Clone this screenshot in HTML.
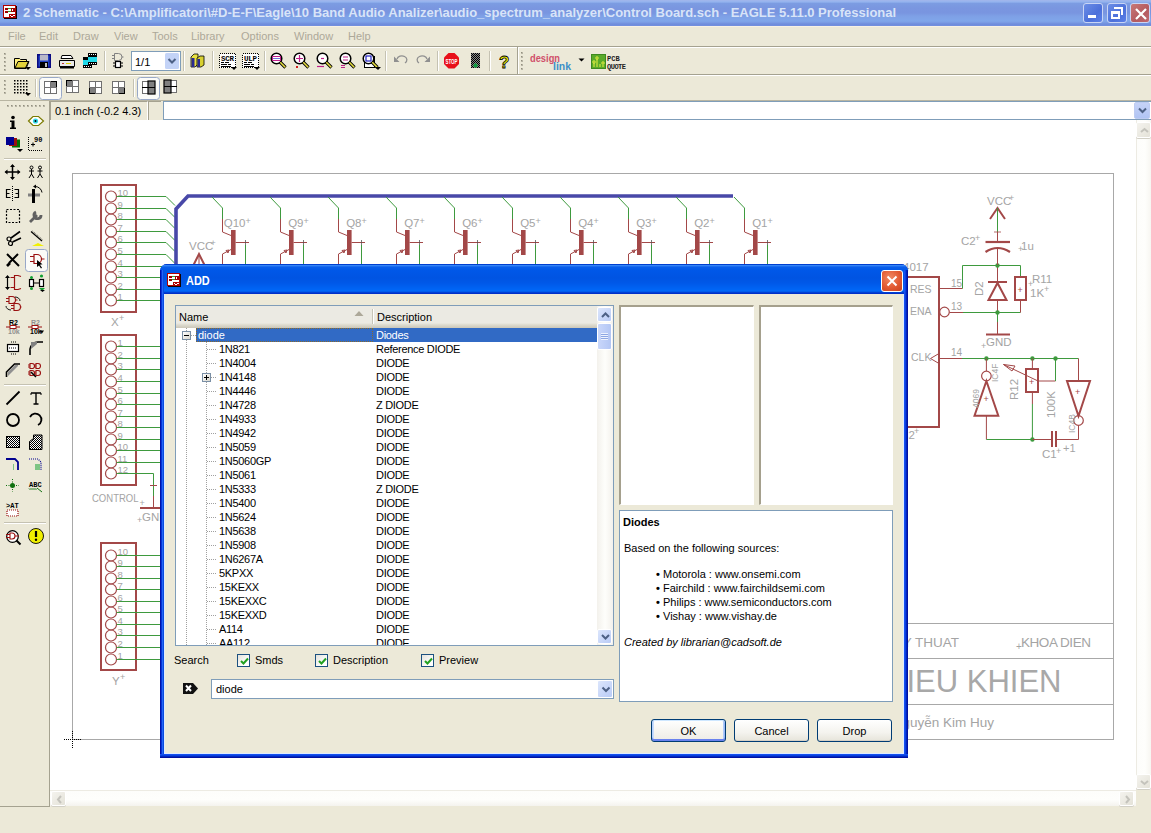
<!DOCTYPE html>
<html><head><meta charset="utf-8">
<style>
*{box-sizing:border-box}
html,body{margin:0;padding:0}
body{width:1151px;height:833px;overflow:hidden;position:relative;background:#ECE9D8;font:11px "Liberation Sans",sans-serif;color:#000}
.a{position:absolute}
.t{position:absolute;white-space:pre;line-height:13px}
#title{left:0;top:0;width:1151px;height:26px;background:linear-gradient(#A2B5EA 0,#9CB6EE 1px,#92B2EE 2px,#7C9CE2 3.5px,#7A96E0 8px,#7995E0 13px,#7EA0E6 16px,#80A6EA 21px,#7898E2 23px,#6E8CDC 24px,#7390DE 26px)}
#title .tt{left:23px;top:5px;font:bold 13px "Liberation Sans",sans-serif;color:#D8E4F8;line-height:16px}
.wb{position:absolute;top:3px;width:20px;height:20px;border-radius:3px;border:1px solid #C9D5F5;background:linear-gradient(135deg,#6C8EE6,#4C70DA 60%,#5C80E8)}
.menu{color:#ACA899;top:30px}
.sepH{position:absolute;left:0;width:1151px;height:2px;border-top:1px solid #A5A290;border-bottom:1px solid #fff}
.grip{position:absolute;width:2px;background:repeating-linear-gradient(#ACA899 0 1px,transparent 1px 3px)}
.vsep{position:absolute;width:2px;border-left:1px solid #C5C2B2;border-right:1px solid #fff}
.tbtn{position:absolute;border:1px solid #9CB3D8;border-radius:3px;background:#F8F8F4}
#canvas{left:50px;top:120px;width:1086px;height:670px;background:#fff;overflow:hidden}
.sb{position:absolute;background:#FDFDFB}
.sbbtn{position:absolute;border:1px solid #fff;border-radius:2px;background:linear-gradient(135deg,#F4F3EE,#E4E2D8);box-shadow:0 1px 0 #D2D0C6}
</style></head><body>

<!-- Title bar -->
<div id="title" class="a">
  <svg class="a" style="left:3px;top:5px" width="16" height="16" viewBox="0 0 16 16" shape-rendering="crispEdges">
    <rect x="1" y="1" width="13" height="13" fill="#100000"/>
    <rect x="0" y="0" width="13" height="13" fill="#B00000"/>
    <rect x="1" y="1" width="11" height="11" fill="#fff"/>
    <rect x="2" y="3" width="3" height="2" fill="#A00000"/><rect x="2" y="6" width="3" height="2" fill="#A00000"/>
    <rect x="5" y="3" width="3" height="1" fill="#30A030"/><rect x="5" y="6" width="3" height="1" fill="#30A030"/><rect x="8" y="3" width="4" height="4" fill="#A00000"/><rect x="9" y="4" width="1" height="2" fill="#fff"/>
    <rect x="6" y="9" width="7" height="4" fill="#B00000"/><rect x="7" y="10" width="1" height="1" fill="#fff"/><rect x="8" y="11" width="2" height="1" fill="#fff"/><rect x="10" y="10" width="2" height="1" fill="#fff"/>
  </svg>
  <div class="t tt">2 Schematic - C:\Amplificatori\#D-E-F\Eagle\10 Band Audio Analizer\audio_spectrum_analyzer\Control Board.sch - EAGLE 5.11.0 Professional</div>
  <div class="wb" style="left:1083px"><div class="a" style="left:4px;top:11px;width:8px;height:3px;background:#fff"></div></div>
  <div class="wb" style="left:1107px"><div class="a" style="left:3px;top:7px;width:9px;height:8px;border:2px solid #fff;border-top-width:3px"></div><div class="a" style="left:6px;top:3px;width:9px;height:8px;border-top:2px solid #fff;border-right:2px solid #fff"></div></div>
  <div class="wb" style="left:1130px;background:linear-gradient(135deg,#C87878,#B45A60 60%,#C06A70)"><svg class="a" style="left:3px;top:3px" width="14" height="14"><path d="M2 2 L12 12 M12 2 L2 12" stroke="#fff" stroke-width="2.2"/></svg></div>
</div>

<!-- Menu -->
<div class="a" style="left:0;top:26px;width:1151px;height:1px;background:#F7F1E4"></div>
<div class="t menu" style="left:8px">File</div>
<div class="t menu" style="left:39px">Edit</div>
<div class="t menu" style="left:73px">Draw</div>
<div class="t menu" style="left:114px">View</div>
<div class="t menu" style="left:152px">Tools</div>
<div class="t menu" style="left:191px">Library</div>
<div class="t menu" style="left:241px">Options</div>
<div class="t menu" style="left:294px">Window</div>
<div class="t menu" style="left:348px">Help</div>
<div class="sepH" style="top:46px"></div>
<div class="sepH" style="top:74px"></div>
<div class="sepH" style="top:100px;border-top-color:#B8B5A2;border-bottom:none;height:1px"></div>

<!-- toolbar1 placeholder -->
<div id="tb1"><svg class="a" style="left:0;top:47px" width="640" height="53" viewBox="0 47 640 53" font-family="Liberation Sans, sans-serif"><rect x="4" y="53" width="2" height="2" fill="#B8B5A5"/><rect x="4" y="53" width="1" height="1" fill="#918E7E"/>
<rect x="4" y="57" width="2" height="2" fill="#B8B5A5"/><rect x="4" y="57" width="1" height="1" fill="#918E7E"/>
<rect x="4" y="61" width="2" height="2" fill="#B8B5A5"/><rect x="4" y="61" width="1" height="1" fill="#918E7E"/>
<rect x="4" y="65" width="2" height="2" fill="#B8B5A5"/><rect x="4" y="65" width="1" height="1" fill="#918E7E"/>
<rect x="4" y="69" width="2" height="2" fill="#B8B5A5"/><rect x="4" y="69" width="1" height="1" fill="#918E7E"/>
<rect x="4" y="80" width="2" height="2" fill="#B8B5A5"/><rect x="4" y="80" width="1" height="1" fill="#918E7E"/>
<rect x="4" y="84" width="2" height="2" fill="#B8B5A5"/><rect x="4" y="84" width="1" height="1" fill="#918E7E"/>
<rect x="4" y="88" width="2" height="2" fill="#B8B5A5"/><rect x="4" y="88" width="1" height="1" fill="#918E7E"/>
<rect x="4" y="92" width="2" height="2" fill="#B8B5A5"/><rect x="4" y="92" width="1" height="1" fill="#918E7E"/>
<rect x="104" y="51" width="1" height="20" fill="#C5C2B2"/><rect x="105" y="51" width="1" height="20" fill="#FFFFFF"/>
<rect x="183" y="51" width="1" height="20" fill="#C5C2B2"/><rect x="184" y="51" width="1" height="20" fill="#FFFFFF"/>
<rect x="212" y="51" width="1" height="20" fill="#C5C2B2"/><rect x="213" y="51" width="1" height="20" fill="#FFFFFF"/>
<rect x="264" y="51" width="1" height="20" fill="#C5C2B2"/><rect x="265" y="51" width="1" height="20" fill="#FFFFFF"/>
<rect x="385" y="51" width="1" height="20" fill="#C5C2B2"/><rect x="386" y="51" width="1" height="20" fill="#FFFFFF"/>
<rect x="437" y="51" width="1" height="20" fill="#C5C2B2"/><rect x="438" y="51" width="1" height="20" fill="#FFFFFF"/>
<rect x="489" y="51" width="1" height="20" fill="#C5C2B2"/><rect x="490" y="51" width="1" height="20" fill="#FFFFFF"/>
<rect x="35" y="79" width="1" height="18" fill="#C5C2B2"/><rect x="36" y="79" width="1" height="18" fill="#FFFFFF"/>
<rect x="133" y="79" width="1" height="18" fill="#C5C2B2"/><rect x="134" y="79" width="1" height="18" fill="#FFFFFF"/>
<rect x="517" y="47" width="1" height="27" fill="#A5A290"/><rect x="518" y="47" width="1" height="27" fill="#fff"/>
<rect x="521" y="52" width="2" height="2" fill="#B8B5A5"/><rect x="521" y="52" width="1" height="1" fill="#918E7E"/>
<rect x="521" y="56" width="2" height="2" fill="#B8B5A5"/><rect x="521" y="56" width="1" height="1" fill="#918E7E"/>
<rect x="521" y="60" width="2" height="2" fill="#B8B5A5"/><rect x="521" y="60" width="1" height="1" fill="#918E7E"/>
<rect x="521" y="64" width="2" height="2" fill="#B8B5A5"/><rect x="521" y="64" width="1" height="1" fill="#918E7E"/>
<rect x="521" y="68" width="2" height="2" fill="#B8B5A5"/><rect x="521" y="68" width="1" height="1" fill="#918E7E"/>
<path d="M14.5 58.5 h5 l1 1 h6 v2 h2.5 l-3 7 h-11.5 z" fill="#FFF07A" stroke="#000" stroke-width="1"/>
<path d="M15 68 l3 -6.5 h10.5 l-3 6.5 z" fill="#E3D23A" stroke="#000" stroke-width="1"/>
<path d="M25 67 h6 l-3 3 z" fill="#000"/>
<rect x="37" y="54" width="14" height="14" fill="#0A0A80"/><rect x="38.5" y="55.5" width="11" height="11" fill="#2040C0"/><rect x="40" y="54.5" width="8" height="6" fill="#B8B8C8"/><rect x="40" y="62" width="8" height="6" fill="#000"/><rect x="45" y="63" width="2" height="4" fill="#C0C0C0"/>
<path d="M62 55.5 h9 l2 3 v0 h-12 z" fill="#fff" stroke="#000"/><path d="M59.5 60.5 h15 v6 h-15 z" fill="#E8E8E8" stroke="#000"/><rect x="60" y="66.5" width="14" height="2" fill="#000"/><rect x="62" y="63" width="2" height="1" fill="#C03030"/><rect x="66" y="63" width="5" height="1" fill="#E0D000"/>
<rect x="88" y="53" width="9" height="4" fill="#000"/><rect x="83" y="57" width="14" height="8" fill="#20D8E8"/><rect x="83" y="57" width="5" height="3" fill="#000"/><rect x="88" y="62" width="9" height="3" fill="#000"/><rect x="83" y="65" width="9" height="3" fill="#000"/>
<g fill="#fff"><rect x="89" y="54" width="1" height="1"/><rect x="91" y="54" width="1" height="1"/><rect x="93" y="54" width="1" height="1"/><rect x="95" y="54" width="1" height="1"/><rect x="89" y="63" width="1" height="1"/><rect x="91" y="63" width="1" height="1"/><rect x="93" y="63" width="1" height="1"/><rect x="95" y="63" width="1" height="1"/><rect x="84" y="66" width="1" height="1"/><rect x="86" y="66" width="1" height="1"/><rect x="88" y="66" width="1" height="1"/><rect x="90" y="66" width="1" height="1"/></g>
<path d="M114.5 53.5 h4 a3.5 3.5 0 0 1 0 7 h-4 z M112 55.5 h2.5 M112 58.5 h2.5 M122 57 h1.5" fill="none" stroke="#808080"/>
<rect x="115.5" y="61.5" width="5" height="6" fill="#fff" stroke="#000" stroke-width="1.2"/><path d="M113 63 h2.5 M113 66 h2.5 M120.5 63 h2.5 M120.5 66 h2.5" stroke="#000" stroke-width="1.2"/>
<rect x="131.5" y="51.5" width="49" height="19" fill="#fff" stroke="#7F9DB9"/>
<rect x="165" y="53" width="14" height="16" rx="1.5" fill="#C3D3F7"/>
<path d="M168.5 59 l3.5 3.5 l3.5 -3.5" fill="none" stroke="#4D6185" stroke-width="2"/>
<text x="135" y="65.5" font-size="11" fill="#000" font-family="Liberation Sans">1/1</text>
<path d="M191 57 l3 -3 h4 v10 l-3 3 h-4 z" fill="#E8E040" stroke="#000" stroke-width="0.8"/><path d="M197 58 l3 -2 h4 v9 l-3 2 h-4 z" fill="#D8D030" stroke="#000" stroke-width="0.8"/><rect x="191.5" y="58" width="3" height="9" fill="#2A2A90"/><rect x="197.5" y="59" width="2.5" height="8" fill="#2A2A90"/>
<rect x="219.5" y="53.5" width="16" height="14" fill="#fff" stroke="#000" stroke-dasharray="1 1" shape-rendering="crispEdges"/>
<text x="221" y="60.5" font-size="7.5" font-weight="bold" fill="#000" font-family="Liberation Mono" textLength="13">SCR</text>
<path d="M221 62.5 h3 M225 62.5 h4 M221 64.5 h6 M228 64.5 h3 M221 66.5 h10" stroke="#000"/>
<path d="M231 67 h6 l-3 3 z" fill="#000"/>
<rect x="242.5" y="53.5" width="16" height="14" fill="#fff" stroke="#000" stroke-dasharray="1 1" shape-rendering="crispEdges"/>
<text x="244" y="60.5" font-size="7.5" font-weight="bold" fill="#000" font-family="Liberation Mono" textLength="13">ULP</text>
<path d="M244 62.5 h3 M248 62.5 h4 M244 64.5 h6 M251 64.5 h3 M244 66.5 h10" stroke="#000"/>
<path d="M254 67 h6 l-3 3 z" fill="#000"/>
<circle cx="276.5" cy="58.5" r="5.3" fill="#fff" stroke="#000" stroke-width="1.5"/>
<path d="M280.0 62 L285.5 67.5" stroke="#000" stroke-width="3.2"/><path d="M280.3 62.3 L285.2 67.2" stroke="#E8E040" stroke-width="1.6"/>
<rect x="272.5" y="56.5" width="8" height="4" fill="none" stroke="#C0208A" shape-rendering="crispEdges"/><path d="M273 58.5 h7" stroke="#5050D0" stroke-width="0.8"/>
<circle cx="299.5" cy="58.5" r="5.3" fill="#fff" stroke="#000" stroke-width="1.5"/>
<path d="M303.0 62 L308.5 67.5" stroke="#000" stroke-width="3.2"/><path d="M303.3 62.3 L308.2 67.2" stroke="#E8E040" stroke-width="1.6"/>
<path d="M299.5 55 v7 M296 58.5 h7" stroke="#C0208A" stroke-width="1.2"/><rect x="296" y="66" width="2" height="2" fill="#D02020"/>
<circle cx="322.5" cy="58.5" r="5.3" fill="#fff" stroke="#000" stroke-width="1.5"/>
<path d="M326.0 62 L331.5 67.5" stroke="#000" stroke-width="3.2"/><path d="M326.3 62.3 L331.2 67.2" stroke="#E8E040" stroke-width="1.6"/>
<path d="M321 58.5 h3" stroke="#C0208A" stroke-width="1.2"/><path d="M317 66.5 h7" stroke="#C0208A" stroke-width="1.2"/>
<circle cx="345.5" cy="58.5" r="5.3" fill="#fff" stroke="#000" stroke-width="1.5"/>
<path d="M349.0 62 L354.5 67.5" stroke="#000" stroke-width="3.2"/><path d="M349.3 62.3 L354.2 67.2" stroke="#E8E040" stroke-width="1.6"/>
<path d="M343 57 h5 M343 60 h5" stroke="#C0208A" stroke-width="1.2"/><path d="M341 65.5 h4 M341 67.5 h4" stroke="#C0208A" stroke-width="1.2"/>
<rect x="364.5" y="56.5" width="10" height="11" fill="#fff" stroke="#000"/>
<circle cx="368.5" cy="58.5" r="5.3" fill="#fff" stroke="#000" stroke-width="1.5"/>
<path d="M372.0 62 L377.5 67.5" stroke="#000" stroke-width="3.2"/><path d="M372.3 62.3 L377.2 67.2" stroke="#E8E040" stroke-width="1.6"/>
<rect x="366" y="56" width="5" height="5" fill="none" stroke="#2020C0" stroke-width="1.2"/>
<path d="M375 67 h6 l-3 3 z" fill="#000"/>
<path d="M397 59 a5 4 0 1 1 8 4" fill="none" stroke="#909090" stroke-width="1.3"/><path d="M394 56.5 v5.5 h5.5 z" fill="#909090"/>
<path d="M427 59 a5 4 0 1 0 -8 4" fill="none" stroke="#909090" stroke-width="1.3"/><path d="M430 56.5 v5.5 h-5.5 z" fill="#909090"/>
<path d="M448.5 53 h6 l4.5 4.5 v6.5 l-4.5 4.5 h-6 l-4.5 -4.5 v-6.5 z" fill="#E8101A"/>
<text x="445.5" y="63.5" font-size="6.5" font-weight="bold" fill="#fff" font-family="Liberation Sans" textLength="12" lengthAdjust="spacingAndGlyphs">STOP</text>
<defs><pattern id="chk" width="2" height="2" patternUnits="userSpaceOnUse"><rect width="1" height="1" fill="#000"/><rect x="1" y="1" width="1" height="1" fill="#000"/><rect x="1" width="1" height="1" fill="#888"/><rect y="1" width="1" height="1" fill="#888"/></pattern></defs>
<rect x="471" y="53" width="9" height="15" fill="url(#chk)"/><path d="M475.5 63 l2.5 2.5 l-2.5 2.5 l-2.5 -2.5 z" fill="#10A040"/>
<text x="499" y="68" font-size="17" font-weight="bold" fill="#F0F000" stroke="#000" stroke-width="0.8" font-family="Liberation Sans">?</text>
<text x="530" y="62" font-size="11" font-weight="bold" fill="#D0506A" font-family="Liberation Sans" textLength="30" lengthAdjust="spacingAndGlyphs">design</text>
<text x="553" y="69.5" font-size="10" font-weight="bold" fill="#3C90C8" font-family="Liberation Sans" textLength="18" lengthAdjust="spacingAndGlyphs">link</text>
<path d="M578.5 58.5 h6 l-3 3 z" fill="#000"/>
<rect x="591" y="54" width="15" height="15" fill="#3E8A1E"/><rect x="592" y="55" width="13" height="13" fill="#5AAA2A"/>
<path d="M594 67 v-4 M597 67 v-8 M600 67 v-3 M603 67 v-2" stroke="#E8F040" stroke-width="1"/><circle cx="594" cy="62" r="1.2" fill="none" stroke="#E8F040"/><circle cx="597" cy="58" r="1.2" fill="none" stroke="#E8F040"/><circle cx="603" cy="63" r="1.2" fill="none" stroke="#E8F040"/>
<text x="607" y="60.5" font-size="7" font-weight="bold" fill="#222" font-family="Liberation Mono">PCB</text><text x="607" y="68.5" font-size="7" font-weight="bold" fill="#222" font-family="Liberation Mono" textLength="19">QUOTE</text>
<rect x="14" y="80" width="1.5" height="1.5" fill="#000"/>
<rect x="14" y="83" width="1.5" height="1.5" fill="#000"/>
<rect x="14" y="86" width="1.5" height="1.5" fill="#000"/>
<rect x="14" y="89" width="1.5" height="1.5" fill="#000"/>
<rect x="14" y="92" width="1.5" height="1.5" fill="#000"/>
<rect x="17" y="80" width="1.5" height="1.5" fill="#000"/>
<rect x="17" y="83" width="1.5" height="1.5" fill="#000"/>
<rect x="17" y="86" width="1.5" height="1.5" fill="#000"/>
<rect x="17" y="89" width="1.5" height="1.5" fill="#000"/>
<rect x="17" y="92" width="1.5" height="1.5" fill="#000"/>
<rect x="20" y="80" width="1.5" height="1.5" fill="#000"/>
<rect x="20" y="83" width="1.5" height="1.5" fill="#000"/>
<rect x="20" y="86" width="1.5" height="1.5" fill="#000"/>
<rect x="20" y="89" width="1.5" height="1.5" fill="#000"/>
<rect x="20" y="92" width="1.5" height="1.5" fill="#000"/>
<rect x="23" y="80" width="1.5" height="1.5" fill="#000"/>
<rect x="23" y="83" width="1.5" height="1.5" fill="#000"/>
<rect x="23" y="86" width="1.5" height="1.5" fill="#000"/>
<rect x="23" y="89" width="1.5" height="1.5" fill="#000"/>
<rect x="23" y="92" width="1.5" height="1.5" fill="#000"/>
<rect x="26" y="80" width="1.5" height="1.5" fill="#000"/>
<rect x="26" y="83" width="1.5" height="1.5" fill="#000"/>
<rect x="26" y="86" width="1.5" height="1.5" fill="#000"/>
<rect x="26" y="89" width="1.5" height="1.5" fill="#000"/>
<rect x="26" y="92" width="1.5" height="1.5" fill="#000"/>
<path d="M25 93 h6 l-3 3 z" fill="#000"/>
<rect x="39.5" y="77.5" width="22" height="22" rx="3" fill="#FBFBF8" stroke="#98A8C8"/>
<rect x="137.5" y="77.5" width="22" height="22" rx="3" fill="#FBFBF8" stroke="#98A8C8"/>
<rect x="44.5" y="81.5" width="12" height="12" fill="#fff" stroke="#707070"/>
<rect x="50.5" y="81.5" width="6" height="6" fill="#808080" stroke="#000" stroke-width="1" shape-rendering="crispEdges"/>
<path d="M50.5 81 v13 M44 87.5 h13" stroke="#707070"/>
<rect x="66.5" y="80.5" width="12" height="12" fill="#fff" stroke="#707070"/>
<rect x="66.5" y="80.5" width="6" height="6" fill="#808080" stroke="#000" stroke-width="1" shape-rendering="crispEdges"/>
<path d="M72.5 80 v13 M66 86.5 h13" stroke="#707070"/>
<rect x="89.5" y="81.5" width="12" height="12" fill="#fff" stroke="#707070"/>
<rect x="89.5" y="87.5" width="6" height="6" fill="#808080" stroke="#000" stroke-width="1" shape-rendering="crispEdges"/>
<path d="M95.5 81 v13 M89 87.5 h13" stroke="#707070"/>
<rect x="112.5" y="81.5" width="12" height="12" fill="#fff" stroke="#707070"/>
<rect x="118.5" y="87.5" width="6" height="6" fill="#808080" stroke="#000" stroke-width="1" shape-rendering="crispEdges"/>
<path d="M118.5 81 v13 M112 87.5 h13" stroke="#707070"/>
<rect x="142.5" y="81.5" width="12" height="12" fill="#fff" stroke="#707070"/><rect x="148" y="81" width="7" height="13" fill="#808080" stroke="#000" stroke-width="1.2"/><path d="M142 87.5 h13" stroke="#000"/>
<rect x="164.5" y="80.5" width="12" height="12" fill="#fff" stroke="#707070"/><rect x="164" y="80" width="7" height="13" fill="#808080" stroke="#000" stroke-width="1.2"/><path d="M164 86.5 h13" stroke="#000"/></svg></div>

<!-- coordinate bar -->
<div class="a" style="left:50px;top:101px;width:98px;height:19px;border-top:1px solid #A5A290;border-left:1px solid #A5A290;border-right:1px solid #fff;"></div>
<div class="t" style="left:55px;top:105px">0.1 inch (-0.2 4.3)</div>
<div class="a" style="left:148px;top:101px;width:13px;height:19px;border-top:1px solid #A5A290;border-left:1px solid #A5A290;"></div>
<div class="a" style="left:163px;top:101px;width:988px;height:19px;background:#fff;border:1px solid #7F9DB9;border-right:none"></div>
<div class="a" style="left:1134px;top:102px;width:16px;height:17px;border-radius:2px;background:linear-gradient(#C6D3F7,#B0C4F4);border:1px solid #BDCCF2"><svg class="a" style="left:3px;top:4px" width="9" height="7"><path d="M1 1.5 L4.5 5 L8 1.5" stroke="#4D6185" stroke-width="2" fill="none"/></svg></div>

<!-- left toolbar -->
<div class="a" style="left:49px;top:101px;width:1px;height:705px;background:#A5A290"></div>
<div class="a" style="left:0;top:806px;width:50px;height:1px;background:#A5A290"></div>
<div id="lefttb"><svg class="a" style="left:0;top:101px" width="49" height="460" viewBox="0 101 49 460" font-family="Liberation Sans, sans-serif"><rect x="7" y="105" width="2" height="2" fill="#B8B5A5"/><rect x="7" y="105" width="1" height="1" fill="#918E7E"/>
<rect x="11" y="105" width="2" height="2" fill="#B8B5A5"/><rect x="11" y="105" width="1" height="1" fill="#918E7E"/>
<rect x="15" y="105" width="2" height="2" fill="#B8B5A5"/><rect x="15" y="105" width="1" height="1" fill="#918E7E"/>
<rect x="19" y="105" width="2" height="2" fill="#B8B5A5"/><rect x="19" y="105" width="1" height="1" fill="#918E7E"/>
<rect x="23" y="105" width="2" height="2" fill="#B8B5A5"/><rect x="23" y="105" width="1" height="1" fill="#918E7E"/>
<rect x="27" y="105" width="2" height="2" fill="#B8B5A5"/><rect x="27" y="105" width="1" height="1" fill="#918E7E"/>
<rect x="31" y="105" width="2" height="2" fill="#B8B5A5"/><rect x="31" y="105" width="1" height="1" fill="#918E7E"/>
<rect x="35" y="105" width="2" height="2" fill="#B8B5A5"/><rect x="35" y="105" width="1" height="1" fill="#918E7E"/>
<rect x="39" y="105" width="2" height="2" fill="#B8B5A5"/><rect x="39" y="105" width="1" height="1" fill="#918E7E"/>
<rect x="43" y="105" width="2" height="2" fill="#B8B5A5"/><rect x="43" y="105" width="1" height="1" fill="#918E7E"/>
<rect x="4" y="158" width="42" height="1" fill="#C5C2B2"/><rect x="4" y="159" width="42" height="1" fill="#fff"/>
<rect x="4" y="384" width="42" height="1" fill="#C5C2B2"/><rect x="4" y="385" width="42" height="1" fill="#fff"/>
<rect x="4" y="522" width="42" height="1" fill="#C5C2B2"/><rect x="4" y="523" width="42" height="1" fill="#fff"/>
<circle cx="13" cy="117.5" r="1.8" fill="#000"/><path d="M10 120.5 h4.5 v7 h1.5 v1.5 h-6 v-1.5 h1.5 v-5.5 h-1.5 z" fill="#000"/>
<path d="M28.5 121 L33 116.5 H38.5 L43.5 121 L38.5 125.5 H33 Z" fill="#fff" stroke="#7A7A00" stroke-width="1.2"/><circle cx="35.5" cy="121" r="2.6" fill="#30D8E8"/><circle cx="35.5" cy="121" r="1" fill="#000"/>
<rect x="12" y="139.5" width="8" height="8" fill="#007000"/><rect x="9" y="138" width="8" height="8" fill="#9A1010"/><rect x="6" y="137" width="8" height="8" fill="#000090"/><path d="M17 149 h6 l-3 3 z" fill="#000"/>
<path d="M28.5 137 v13.5 h14" fill="none" stroke="#000" stroke-dasharray="1 1"/><path d="M31 144.5 h4 M33 142.5 v4" stroke="#000"/><text x="34" y="142" font-size="7" font-weight="bold" font-family="Liberation Mono">90</text>
<path d="M12.5 165 v14 M5.5 172 h14" stroke="#000" stroke-width="1.5"/><path d="M12.5 164 l-2.5 3 h5 z M12.5 180 l-2.5 -3 h5 z M4.5 172 l3 -2.5 v5 z M20.5 172 l-3 -2.5 v5 z" fill="#000"/>
<circle cx="31.5" cy="167.5" r="1.5" fill="none" stroke="#000"/><path d="M31.5 169 v5 M29.0 171 h5 M31.5 174 l-2.5 4 M31.5 174 l2.5 4" stroke="#000"/>
<circle cx="40" cy="167.5" r="1.5" fill="none" stroke="#000"/><path d="M40 169 v5 M37.5 171 h5 M40 174 l-2.5 4 M40 174 l2.5 4" stroke="#000"/>
<path d="M12.5 186 v16" stroke="#000" stroke-dasharray="1 1"/><path d="M10.5 189.5 h-4 v8 h4 M6.5 193.5 h3 M14.5 189.5 h4 v8 h-4 M18.5 193.5 h-3" fill="none" stroke="#000" stroke-width="1.2"/>
<rect x="28" y="193.5" width="12" height="3" fill="#808080"/><rect x="32" y="189" width="3" height="14" fill="#000"/><path d="M35 186.5 a7 7 0 0 1 7 6" fill="none" stroke="#000"/><path d="M33 186.5 l3 -2 v4 z" fill="#000"/>
<rect x="6.5" y="209.5" width="13" height="13" fill="none" stroke="#000" stroke-width="1.2" stroke-dasharray="2 1.5"/>
<path d="M30 222 L37 215 M36 212 a3.5 3.5 0 1 0 5 3" stroke="#606060" stroke-width="2.8" fill="none"/>
<circle cx="9" cy="239" r="2" fill="none" stroke="#000" stroke-width="1.2"/><circle cx="10.5" cy="243.5" r="2" fill="none" stroke="#000" stroke-width="1.2"/><path d="M11 238 L20 231.5 M12.5 242 L21 238" stroke="#000" stroke-width="1.6"/>
<path d="M31 231.5 L42 241" stroke="#000" stroke-width="1.2"/><path d="M32.5 231 L43 240" stroke="#000" stroke-width="0.6" stroke-dasharray="1 1"/><path d="M32 246 l6 -3 l6 3 z" fill="#F0F000"/>
<path d="M7 254 L19 266 M18 254 L9 263" stroke="#000" stroke-width="2"/><path d="M7 266 l3 -3" stroke="#000" stroke-width="2.6"/>
<rect x="25.5" y="249.5" width="22" height="22" rx="3" fill="#FBFBF8" stroke="#98A8C8"/>
<path d="M34 254.5 h3 a4.5 4.5 0 0 1 0 9 h-3 z M30 256.5 h4 M30 261.5 h4 M41.5 259 h3" fill="none" stroke="#9A1010" stroke-width="1.2"/><path d="M37 260 l0 7 l2 -1.5 l2 3 l1 -0.7 l-2 -3 l2.5 -0.5 z" fill="#000"/>
<path d="M7.5 276.5 V288.5" stroke="#000" stroke-width="1.2"/><path d="M7.5 275 l-2.5 3 h5 z M7.5 290 l-2.5 -3 h5 z" fill="#000"/>
<path d="M21 276.5 L18 275.5 H14.5 V289.5 H18 L21 288.5 M10.5 277.5 H14.5 M10.5 287.5 H14.5" fill="none" stroke="#9A1010" stroke-width="1.2"/>
<rect x="29.5" y="279.5" width="4" height="7" fill="#fff" stroke="#000" stroke-width="1.2"/><rect x="39.5" y="279.5" width="4" height="7" fill="#fff" stroke="#000" stroke-width="1.2"/><path d="M34 283 h5" stroke="#000"/><circle cx="31.5" cy="277.5" r="1.5" fill="#10A030"/><circle cx="31.5" cy="288.5" r="1.5" fill="#10A030"/><circle cx="41.5" cy="276" r="1.6" fill="#10A030"/><path d="M39 288 h6 l-3 3 z" fill="#10A030"/><path d="M40 290 h5 l-2.5 2 z" fill="#000"/>
<path d="M9 296.5 h3 a3.5 3.5 0 0 1 0 7 h-3 z M6 298.5 h3 M6 301.5 h3 M15.5 300 h2 M14 303.5 h3 a3.5 3.5 0 0 1 0 7 h-3 z M11 305.5 h3 M11 308.5 h3 M20.5 307 h1" fill="none" stroke="#9A1010" stroke-width="1.1"/><path d="M15 297 a5 4 0 0 1 5 4 M11 310 a5 4 0 0 1 -5 -4" fill="none" stroke="#000" stroke-width="0.9"/>
<text x="9" y="325" font-size="7" font-weight="bold" fill="#000" font-family="Liberation Sans">R2</text>
<path d="M6 327 h4 M16 327 h4" stroke="#9A1010" stroke-width="1.2"/><rect x="10" y="325.5" width="6" height="3" fill="#fff" stroke="#9A1010"/>
<text x="8" y="334" font-size="7" font-weight="bold" fill="#909090" font-family="Liberation Sans">10k</text>
<text x="31" y="325" font-size="7" font-weight="bold" fill="#909090" font-family="Liberation Sans">R2</text>
<path d="M28 327 h4 M38 327 h4" stroke="#9A1010" stroke-width="1.2"/><rect x="32" y="325.5" width="6" height="3" fill="#fff" stroke="#9A1010"/>
<text x="30" y="334" font-size="7" font-weight="bold" fill="#000" font-family="Liberation Sans">10k</text>
<path d="M39 330.5 h5 l-2 3 z" fill="#000"/>
<rect x="7.5" y="344.5" width="11" height="7" fill="#fff" stroke="#000" stroke-width="1.2"/><path d="M11 342 h6 M9 348 h7 M11 354 h6" stroke="#000" stroke-dasharray="1 1"/>
<path d="M30 355 v-6 a8 8 0 0 1 8 -7 h5" fill="none" stroke="#000" stroke-width="1.6"/><path d="M31 349 l6 -5 v-2 h-6 z" fill="#808080"/>
<path d="M6.5 377 v-5 l8 -8 h5.5" fill="none" stroke="#000" stroke-width="1.6"/><path d="M8 376 l10 -10 v-1 h-3 l-7 7 z" fill="#909090"/>
<g fill="none" stroke="#9A1010" stroke-width="1.1"><path d="M30 363.5 h2 a2.5 2.5 0 0 1 0 5 h-2 z M28 365 h2 M28 367 h2 M36 363.5 h2 a2.5 2.5 0 0 1 0 5 h-2 z M34 365 h2 M34 367 h2 M30 370.5 h2 a2.5 2.5 0 0 1 0 5 h-2 z M28 372 h2 M28 374 h2 M36 370.5 h2 a2.5 2.5 0 0 1 0 5 h-2 z M34 372 h2 M34 374 h2"/></g><path d="M31 372 l5 5" stroke="#000" stroke-width="1.5"/>
<path d="M6.5 404.5 L19.5 391.5" stroke="#000" stroke-width="1.8"/>
<path d="M31 393 h10 M36 393 v11 M33.5 404 h5" stroke="#000" stroke-width="1.4"/><path d="M31 393 v2 M41 393 v2" stroke="#000"/>
<circle cx="13" cy="420" r="6" fill="none" stroke="#000" stroke-width="1.8"/>
<path d="M30 417 a6 6 0 1 1 8 8" fill="none" stroke="#000" stroke-width="1.8"/>
<defs><pattern id="dith" width="2" height="2" patternUnits="userSpaceOnUse"><rect width="2" height="2" fill="#fff"/><rect width="1" height="1" fill="#000"/><rect x="1" y="1" width="1" height="1" fill="#000"/></pattern></defs>
<rect x="6.5" y="436.5" width="13" height="11" fill="url(#dith)" stroke="#000"/>
<path d="M29.5 449.5 v-8 l4 -3 v-3.5 h8.5 v14.5 z" fill="url(#dith)" stroke="#000"/>
<path d="M6 459 h9 l3 3 v8" fill="none" stroke="#000090" stroke-width="1.8"/><path d="M13 465 h2 M13 467 h2 M13 469 h2" stroke="#10A030" stroke-dasharray="1 1"/>
<path d="M29 459 h9 l3 3 v8" fill="none" stroke="#000090" stroke-dasharray="1 1" stroke-width="1.2"/><path d="M35 465 h5 M35 467 h5 M35 469 h5" stroke="#10A030"/>
<circle cx="12.5" cy="485.5" r="2.5" fill="#107010"/><path d="M12.5 479 v13 M6 485.5 h13" stroke="#107010" stroke-dasharray="1 1.5"/>
<text x="29" y="487" font-size="7" font-weight="bold" font-family="Liberation Mono">ABC</text><path d="M29 488.5 l1 1 l1 -1 l1 1 l1 -1 l1 1 l1 -1 l1 1 l1 -1 M37 488 l5 4" fill="none" stroke="#107010" stroke-width="1"/>
<text x="6" y="508" font-size="7" font-weight="bold" font-family="Liberation Mono">&gt;AT</text><rect x="7" y="510" width="11" height="6" fill="#fff" stroke="#9A1010" stroke-width="1.2" stroke-dasharray="1 1"/>
<circle cx="12.5" cy="536.5" r="5.8" fill="#fff" stroke="#000" stroke-width="1.2"/><path d="M10 533 h2 a3 3 0 0 1 0 6 h-2 z M6 534.5 h4 M6 537.5 h4 M15 536 h4" fill="none" stroke="#9A1010" stroke-width="1.1"/><path d="M16.5 540.5 l4 4" stroke="#000" stroke-width="2"/>
<circle cx="36" cy="536" r="7.5" fill="#F0F000" stroke="#000" stroke-width="0.9"/><path d="M36 531 v6" stroke="#000" stroke-width="2.2"/><circle cx="36" cy="539.8" r="1.2" fill="#000"/></svg></div>

<!-- canvas -->
<div id="canvas" class="a">
<svg class="a" style="left:0;top:0" width="1086" height="670" viewBox="50 120 1086 670" font-family="Liberation Sans, sans-serif"><rect x="72.5" y="173.5" width="1041" height="566" fill="none" stroke="#A8A8A8" stroke-width="1"/>
<line x1="700" y1="623.5" x2="1113.5" y2="623.5" stroke="#A8A8A8" stroke-width="1"/>
<line x1="700" y1="658.5" x2="1113.5" y2="658.5" stroke="#A8A8A8" stroke-width="1"/>
<line x1="700" y1="704.5" x2="1113.5" y2="704.5" stroke="#A8A8A8" stroke-width="1"/>
<text x="959" y="647" font-size="13.5" fill="#A4A4A4" text-anchor="end">DAI HOC SU PHAM KY THUAT</text>
<text x="1021" y="647" font-size="13.5" fill="#A4A4A4" textLength="70">KHOA DIEN</text>
<text x="1016" y="650" font-size="10" fill="#A4A4A4" >+</text>
<text x="1061.5" y="692" font-size="31" fill="#A8A8A8" text-anchor="end">MACH DIEU KHIEN</text>
<text x="994" y="727" font-size="13.5" fill="#A4A4A4" text-anchor="end">GVHD: Nguyễn Kim Huy</text>
<path d="M64 739.5 H81 M72.5 731 V748" stroke="#000" stroke-width="1" stroke-dasharray="1 1"/>
<rect x="101" y="185" width="35" height="127" fill="none" stroke="#A34848" stroke-width="2"/>
<circle cx="111" cy="196.5" r="5.5" stroke="#A34848" stroke-width="1.2" fill="none"/>
<line x1="116.5" y1="196.5" x2="166" y2="196.5" stroke="#3E9A3E" stroke-width="1"/>
<text x="117.5" y="196.0" font-size="9.5" fill="#A4A4A4" >10</text>
<circle cx="111" cy="208.5" r="5.5" stroke="#A34848" stroke-width="1.2" fill="none"/>
<line x1="116.5" y1="208.5" x2="166" y2="208.5" stroke="#3E9A3E" stroke-width="1"/>
<text x="117.5" y="208.0" font-size="9.5" fill="#A4A4A4" >9</text>
<circle cx="111" cy="219.5" r="5.5" stroke="#A34848" stroke-width="1.2" fill="none"/>
<line x1="116.5" y1="219.5" x2="166" y2="219.5" stroke="#3E9A3E" stroke-width="1"/>
<text x="117.5" y="219.0" font-size="9.5" fill="#A4A4A4" >8</text>
<circle cx="111" cy="231.5" r="5.5" stroke="#A34848" stroke-width="1.2" fill="none"/>
<line x1="116.5" y1="231.5" x2="166" y2="231.5" stroke="#3E9A3E" stroke-width="1"/>
<text x="117.5" y="231.0" font-size="9.5" fill="#A4A4A4" >7</text>
<circle cx="111" cy="242.5" r="5.5" stroke="#A34848" stroke-width="1.2" fill="none"/>
<line x1="116.5" y1="242.5" x2="166" y2="242.5" stroke="#3E9A3E" stroke-width="1"/>
<text x="117.5" y="242.0" font-size="9.5" fill="#A4A4A4" >6</text>
<circle cx="111" cy="254.5" r="5.5" stroke="#A34848" stroke-width="1.2" fill="none"/>
<line x1="116.5" y1="254.5" x2="166" y2="254.5" stroke="#3E9A3E" stroke-width="1"/>
<text x="117.5" y="254.0" font-size="9.5" fill="#A4A4A4" >5</text>
<circle cx="111" cy="266.5" r="5.5" stroke="#A34848" stroke-width="1.2" fill="none"/>
<line x1="116.5" y1="266.5" x2="166" y2="266.5" stroke="#3E9A3E" stroke-width="1"/>
<text x="117.5" y="266.0" font-size="9.5" fill="#A4A4A4" >4</text>
<circle cx="111" cy="277.5" r="5.5" stroke="#A34848" stroke-width="1.2" fill="none"/>
<line x1="116.5" y1="277.5" x2="166" y2="277.5" stroke="#3E9A3E" stroke-width="1"/>
<text x="117.5" y="277.0" font-size="9.5" fill="#A4A4A4" >3</text>
<circle cx="111" cy="289.5" r="5.5" stroke="#A34848" stroke-width="1.2" fill="none"/>
<line x1="116.5" y1="289.5" x2="166" y2="289.5" stroke="#3E9A3E" stroke-width="1"/>
<text x="117.5" y="289.0" font-size="9.5" fill="#A4A4A4" >2</text>
<circle cx="111" cy="300.5" r="5.5" stroke="#A34848" stroke-width="1.2" fill="none"/>
<line x1="116.5" y1="300.5" x2="166" y2="300.5" stroke="#3E9A3E" stroke-width="1"/>
<text x="117.5" y="300.0" font-size="9.5" fill="#A4A4A4" >1</text>
<line x1="166" y1="196.5" x2="175" y2="205.5" stroke="#3E9A3E" stroke-width="1"/>
<line x1="166" y1="208.5" x2="175" y2="217.5" stroke="#3E9A3E" stroke-width="1"/>
<line x1="166" y1="219.5" x2="175" y2="228.5" stroke="#3E9A3E" stroke-width="1"/>
<line x1="166" y1="231.5" x2="175" y2="240.5" stroke="#3E9A3E" stroke-width="1"/>
<line x1="166" y1="242.5" x2="175" y2="251.5" stroke="#3E9A3E" stroke-width="1"/>
<line x1="166" y1="254.5" x2="175" y2="263.5" stroke="#3E9A3E" stroke-width="1"/>
<line x1="166" y1="266.5" x2="170" y2="266.5" stroke="#3E9A3E" stroke-width="1"/>
<line x1="166" y1="277.5" x2="170" y2="277.5" stroke="#3E9A3E" stroke-width="1"/>
<line x1="166" y1="289.5" x2="170" y2="289.5" stroke="#3E9A3E" stroke-width="1"/>
<line x1="166" y1="300.5" x2="170" y2="300.5" stroke="#3E9A3E" stroke-width="1"/>
<text x="111" y="326" font-size="11.5" fill="#A4A4A4" >X</text>
<text x="119" y="321" font-size="9" fill="#A4A4A4" >+</text>
<rect x="101" y="335" width="35" height="150" fill="none" stroke="#A34848" stroke-width="2"/>
<circle cx="111" cy="346.5" r="5.5" stroke="#A34848" stroke-width="1.2" fill="none"/>
<text x="117.5" y="346.0" font-size="9.5" fill="#A4A4A4" >1</text>
<line x1="116.5" y1="346.5" x2="170" y2="346.5" stroke="#3E9A3E" stroke-width="1"/>
<circle cx="111" cy="358.5" r="5.5" stroke="#A34848" stroke-width="1.2" fill="none"/>
<text x="117.5" y="358.0" font-size="9.5" fill="#A4A4A4" >2</text>
<line x1="116.5" y1="358.5" x2="170" y2="358.5" stroke="#3E9A3E" stroke-width="1"/>
<circle cx="111" cy="369.5" r="5.5" stroke="#A34848" stroke-width="1.2" fill="none"/>
<text x="117.5" y="369.0" font-size="9.5" fill="#A4A4A4" >3</text>
<line x1="116.5" y1="369.5" x2="170" y2="369.5" stroke="#3E9A3E" stroke-width="1"/>
<circle cx="111" cy="381.5" r="5.5" stroke="#A34848" stroke-width="1.2" fill="none"/>
<text x="117.5" y="381.0" font-size="9.5" fill="#A4A4A4" >4</text>
<line x1="116.5" y1="381.5" x2="170" y2="381.5" stroke="#3E9A3E" stroke-width="1"/>
<circle cx="111" cy="393.5" r="5.5" stroke="#A34848" stroke-width="1.2" fill="none"/>
<text x="117.5" y="393.0" font-size="9.5" fill="#A4A4A4" >5</text>
<line x1="116.5" y1="393.5" x2="170" y2="393.5" stroke="#3E9A3E" stroke-width="1"/>
<circle cx="111" cy="404.5" r="5.5" stroke="#A34848" stroke-width="1.2" fill="none"/>
<text x="117.5" y="404.0" font-size="9.5" fill="#A4A4A4" >6</text>
<line x1="116.5" y1="404.5" x2="170" y2="404.5" stroke="#3E9A3E" stroke-width="1"/>
<circle cx="111" cy="416.5" r="5.5" stroke="#A34848" stroke-width="1.2" fill="none"/>
<text x="117.5" y="416.0" font-size="9.5" fill="#A4A4A4" >7</text>
<line x1="116.5" y1="416.5" x2="170" y2="416.5" stroke="#3E9A3E" stroke-width="1"/>
<circle cx="111" cy="427.5" r="5.5" stroke="#A34848" stroke-width="1.2" fill="none"/>
<text x="117.5" y="427.0" font-size="9.5" fill="#A4A4A4" >8</text>
<line x1="116.5" y1="427.5" x2="170" y2="427.5" stroke="#3E9A3E" stroke-width="1"/>
<circle cx="111" cy="439.5" r="5.5" stroke="#A34848" stroke-width="1.2" fill="none"/>
<text x="117.5" y="439.0" font-size="9.5" fill="#A4A4A4" >9</text>
<line x1="116.5" y1="439.5" x2="170" y2="439.5" stroke="#3E9A3E" stroke-width="1"/>
<circle cx="111" cy="450.5" r="5.5" stroke="#A34848" stroke-width="1.2" fill="none"/>
<text x="117.5" y="450.0" font-size="9.5" fill="#A4A4A4" >10</text>
<line x1="116.5" y1="450.5" x2="170" y2="450.5" stroke="#3E9A3E" stroke-width="1"/>
<circle cx="111" cy="462.5" r="5.5" stroke="#A34848" stroke-width="1.2" fill="none"/>
<text x="117.5" y="462.0" font-size="9.5" fill="#A4A4A4" >11</text>
<line x1="116.5" y1="462.5" x2="170" y2="462.5" stroke="#3E9A3E" stroke-width="1"/>
<circle cx="111" cy="473.5" r="5.5" stroke="#A34848" stroke-width="1.2" fill="none"/>
<text x="117.5" y="473.0" font-size="9.5" fill="#A4A4A4" >12</text>
<line x1="116.5" y1="473.5" x2="153.5" y2="473.5" stroke="#3E9A3E" stroke-width="1"/>
<line x1="153.5" y1="473.5" x2="153.5" y2="496" stroke="#3E9A3E" stroke-width="1"/>
<line x1="153.5" y1="496" x2="153.5" y2="508" stroke="#A34848" stroke-width="1"/>
<line x1="150" y1="485.5" x2="157" y2="485.5" stroke="#A34848" stroke-width="1"/>
<line x1="140" y1="508" x2="170" y2="508" stroke="#A34848" stroke-width="2"/>
<text x="92" y="502" font-size="11" fill="#A4A4A4" textLength="46.5" lengthAdjust="spacingAndGlyphs">CONTROL</text>
<text x="139.5" y="506" font-size="9" fill="#A4A4A4" >+</text>
<text x="142" y="520.5" font-size="11.5" fill="#A4A4A4" >GND</text>
<text x="137" y="523" font-size="9" fill="#A4A4A4" >+</text>
<rect x="101" y="543" width="35" height="127" fill="none" stroke="#A34848" stroke-width="2"/>
<circle cx="111" cy="555.5" r="5.5" stroke="#A34848" stroke-width="1.2" fill="none"/>
<line x1="116.5" y1="555.5" x2="170" y2="555.5" stroke="#3E9A3E" stroke-width="1"/>
<text x="117.5" y="555.0" font-size="9.5" fill="#A4A4A4" >10</text>
<circle cx="111" cy="566.5" r="5.5" stroke="#A34848" stroke-width="1.2" fill="none"/>
<line x1="116.5" y1="566.5" x2="170" y2="566.5" stroke="#3E9A3E" stroke-width="1"/>
<text x="117.5" y="566.0" font-size="9.5" fill="#A4A4A4" >9</text>
<circle cx="111" cy="578.5" r="5.5" stroke="#A34848" stroke-width="1.2" fill="none"/>
<line x1="116.5" y1="578.5" x2="170" y2="578.5" stroke="#3E9A3E" stroke-width="1"/>
<text x="117.5" y="578.0" font-size="9.5" fill="#A4A4A4" >8</text>
<circle cx="111" cy="589.5" r="5.5" stroke="#A34848" stroke-width="1.2" fill="none"/>
<line x1="116.5" y1="589.5" x2="170" y2="589.5" stroke="#3E9A3E" stroke-width="1"/>
<text x="117.5" y="589.0" font-size="9.5" fill="#A4A4A4" >7</text>
<circle cx="111" cy="601.5" r="5.5" stroke="#A34848" stroke-width="1.2" fill="none"/>
<line x1="116.5" y1="601.5" x2="170" y2="601.5" stroke="#3E9A3E" stroke-width="1"/>
<text x="117.5" y="601.0" font-size="9.5" fill="#A4A4A4" >6</text>
<circle cx="111" cy="612.5" r="5.5" stroke="#A34848" stroke-width="1.2" fill="none"/>
<line x1="116.5" y1="612.5" x2="170" y2="612.5" stroke="#3E9A3E" stroke-width="1"/>
<text x="117.5" y="612.0" font-size="9.5" fill="#A4A4A4" >5</text>
<circle cx="111" cy="624.5" r="5.5" stroke="#A34848" stroke-width="1.2" fill="none"/>
<line x1="116.5" y1="624.5" x2="170" y2="624.5" stroke="#3E9A3E" stroke-width="1"/>
<text x="117.5" y="624.0" font-size="9.5" fill="#A4A4A4" >4</text>
<circle cx="111" cy="635.5" r="5.5" stroke="#A34848" stroke-width="1.2" fill="none"/>
<line x1="116.5" y1="635.5" x2="170" y2="635.5" stroke="#3E9A3E" stroke-width="1"/>
<text x="117.5" y="635.0" font-size="9.5" fill="#A4A4A4" >3</text>
<circle cx="111" cy="647.5" r="5.5" stroke="#A34848" stroke-width="1.2" fill="none"/>
<line x1="116.5" y1="647.5" x2="170" y2="647.5" stroke="#3E9A3E" stroke-width="1"/>
<text x="117.5" y="647.0" font-size="9.5" fill="#A4A4A4" >2</text>
<circle cx="111" cy="659.5" r="5.5" stroke="#A34848" stroke-width="1.2" fill="none"/>
<line x1="116.5" y1="659.5" x2="170" y2="659.5" stroke="#3E9A3E" stroke-width="1"/>
<text x="117.5" y="659.0" font-size="9.5" fill="#A4A4A4" >1</text>
<text x="112" y="685" font-size="11.5" fill="#A4A4A4" >Y</text>
<text x="120" y="680" font-size="9" fill="#A4A4A4" >+</text>
<path d="M176 270 V209 L188 196 H733" stroke="#4848A8" stroke-width="3.6" fill="none"/>
<path d="M212 197 L222.5 208 V219" stroke="#3E9A3E" stroke-width="1" fill="none"/>
<path d="M222.5 219 V232 L231 235.5" stroke="#A34848" stroke-width="1" fill="none"/>
<rect x="231" y="230" width="4.6" height="25" fill="#A34848"/>
<path d="M235.6 242.5 H249" stroke="#A34848" stroke-width="1" fill="none"/>
<line x1="245.5" y1="240" x2="245.5" y2="245" stroke="#555" stroke-width="0.8"/>
<line x1="245.5" y1="245" x2="245.5" y2="270" stroke="#3E9A3E" stroke-width="1"/>
<path d="M231 249.5 L222.5 254 V270" stroke="#A34848" stroke-width="1" fill="none"/>
<path d="M226 250.5 L229 250 L228 253 Z" stroke="#A34848" stroke-width="1" fill="none"/>
<text x="245.5" y="227" font-size="11.5" fill="#A4A4A4" text-anchor="end">Q10</text>
<text x="245.5" y="223.5" font-size="9" fill="#A4A4A4" >+</text>
<path d="M270 197 L280.5 208 V219" stroke="#3E9A3E" stroke-width="1" fill="none"/>
<path d="M280.5 219 V232 L289 235.5" stroke="#A34848" stroke-width="1" fill="none"/>
<rect x="289" y="230" width="4.6" height="25" fill="#A34848"/>
<path d="M293.6 242.5 H307" stroke="#A34848" stroke-width="1" fill="none"/>
<line x1="303.5" y1="240" x2="303.5" y2="245" stroke="#555" stroke-width="0.8"/>
<line x1="303.5" y1="245" x2="303.5" y2="270" stroke="#3E9A3E" stroke-width="1"/>
<path d="M289 249.5 L280.5 254 V270" stroke="#A34848" stroke-width="1" fill="none"/>
<path d="M284 250.5 L287 250 L286 253 Z" stroke="#A34848" stroke-width="1" fill="none"/>
<text x="303.5" y="227" font-size="11.5" fill="#A4A4A4" text-anchor="end">Q9</text>
<text x="303.5" y="223.5" font-size="9" fill="#A4A4A4" >+</text>
<path d="M328 197 L338.5 208 V219" stroke="#3E9A3E" stroke-width="1" fill="none"/>
<path d="M338.5 219 V232 L347 235.5" stroke="#A34848" stroke-width="1" fill="none"/>
<rect x="347" y="230" width="4.6" height="25" fill="#A34848"/>
<path d="M351.6 242.5 H365" stroke="#A34848" stroke-width="1" fill="none"/>
<line x1="361.5" y1="240" x2="361.5" y2="245" stroke="#555" stroke-width="0.8"/>
<line x1="361.5" y1="245" x2="361.5" y2="270" stroke="#3E9A3E" stroke-width="1"/>
<path d="M347 249.5 L338.5 254 V270" stroke="#A34848" stroke-width="1" fill="none"/>
<path d="M342 250.5 L345 250 L344 253 Z" stroke="#A34848" stroke-width="1" fill="none"/>
<text x="361.5" y="227" font-size="11.5" fill="#A4A4A4" text-anchor="end">Q8</text>
<text x="361.5" y="223.5" font-size="9" fill="#A4A4A4" >+</text>
<path d="M386 197 L396.5 208 V219" stroke="#3E9A3E" stroke-width="1" fill="none"/>
<path d="M396.5 219 V232 L405 235.5" stroke="#A34848" stroke-width="1" fill="none"/>
<rect x="405" y="230" width="4.6" height="25" fill="#A34848"/>
<path d="M409.6 242.5 H423" stroke="#A34848" stroke-width="1" fill="none"/>
<line x1="419.5" y1="240" x2="419.5" y2="245" stroke="#555" stroke-width="0.8"/>
<line x1="419.5" y1="245" x2="419.5" y2="270" stroke="#3E9A3E" stroke-width="1"/>
<path d="M405 249.5 L396.5 254 V270" stroke="#A34848" stroke-width="1" fill="none"/>
<path d="M400 250.5 L403 250 L402 253 Z" stroke="#A34848" stroke-width="1" fill="none"/>
<text x="419.5" y="227" font-size="11.5" fill="#A4A4A4" text-anchor="end">Q7</text>
<text x="419.5" y="223.5" font-size="9" fill="#A4A4A4" >+</text>
<path d="M444 197 L454.5 208 V219" stroke="#3E9A3E" stroke-width="1" fill="none"/>
<path d="M454.5 219 V232 L463 235.5" stroke="#A34848" stroke-width="1" fill="none"/>
<rect x="463" y="230" width="4.6" height="25" fill="#A34848"/>
<path d="M467.6 242.5 H481" stroke="#A34848" stroke-width="1" fill="none"/>
<line x1="477.5" y1="240" x2="477.5" y2="245" stroke="#555" stroke-width="0.8"/>
<line x1="477.5" y1="245" x2="477.5" y2="270" stroke="#3E9A3E" stroke-width="1"/>
<path d="M463 249.5 L454.5 254 V270" stroke="#A34848" stroke-width="1" fill="none"/>
<path d="M458 250.5 L461 250 L460 253 Z" stroke="#A34848" stroke-width="1" fill="none"/>
<text x="477.5" y="227" font-size="11.5" fill="#A4A4A4" text-anchor="end">Q6</text>
<text x="477.5" y="223.5" font-size="9" fill="#A4A4A4" >+</text>
<path d="M502 197 L512.5 208 V219" stroke="#3E9A3E" stroke-width="1" fill="none"/>
<path d="M512.5 219 V232 L521 235.5" stroke="#A34848" stroke-width="1" fill="none"/>
<rect x="521" y="230" width="4.6" height="25" fill="#A34848"/>
<path d="M525.6 242.5 H539" stroke="#A34848" stroke-width="1" fill="none"/>
<line x1="535.5" y1="240" x2="535.5" y2="245" stroke="#555" stroke-width="0.8"/>
<line x1="535.5" y1="245" x2="535.5" y2="270" stroke="#3E9A3E" stroke-width="1"/>
<path d="M521 249.5 L512.5 254 V270" stroke="#A34848" stroke-width="1" fill="none"/>
<path d="M516 250.5 L519 250 L518 253 Z" stroke="#A34848" stroke-width="1" fill="none"/>
<text x="535.5" y="227" font-size="11.5" fill="#A4A4A4" text-anchor="end">Q5</text>
<text x="535.5" y="223.5" font-size="9" fill="#A4A4A4" >+</text>
<path d="M560 197 L570.5 208 V219" stroke="#3E9A3E" stroke-width="1" fill="none"/>
<path d="M570.5 219 V232 L579 235.5" stroke="#A34848" stroke-width="1" fill="none"/>
<rect x="579" y="230" width="4.6" height="25" fill="#A34848"/>
<path d="M583.6 242.5 H597" stroke="#A34848" stroke-width="1" fill="none"/>
<line x1="593.5" y1="240" x2="593.5" y2="245" stroke="#555" stroke-width="0.8"/>
<line x1="593.5" y1="245" x2="593.5" y2="270" stroke="#3E9A3E" stroke-width="1"/>
<path d="M579 249.5 L570.5 254 V270" stroke="#A34848" stroke-width="1" fill="none"/>
<path d="M574 250.5 L577 250 L576 253 Z" stroke="#A34848" stroke-width="1" fill="none"/>
<text x="593.5" y="227" font-size="11.5" fill="#A4A4A4" text-anchor="end">Q4</text>
<text x="593.5" y="223.5" font-size="9" fill="#A4A4A4" >+</text>
<path d="M618 197 L628.5 208 V219" stroke="#3E9A3E" stroke-width="1" fill="none"/>
<path d="M628.5 219 V232 L637 235.5" stroke="#A34848" stroke-width="1" fill="none"/>
<rect x="637" y="230" width="4.6" height="25" fill="#A34848"/>
<path d="M641.6 242.5 H655" stroke="#A34848" stroke-width="1" fill="none"/>
<line x1="651.5" y1="240" x2="651.5" y2="245" stroke="#555" stroke-width="0.8"/>
<line x1="651.5" y1="245" x2="651.5" y2="270" stroke="#3E9A3E" stroke-width="1"/>
<path d="M637 249.5 L628.5 254 V270" stroke="#A34848" stroke-width="1" fill="none"/>
<path d="M632 250.5 L635 250 L634 253 Z" stroke="#A34848" stroke-width="1" fill="none"/>
<text x="651.5" y="227" font-size="11.5" fill="#A4A4A4" text-anchor="end">Q3</text>
<text x="651.5" y="223.5" font-size="9" fill="#A4A4A4" >+</text>
<path d="M676 197 L686.5 208 V219" stroke="#3E9A3E" stroke-width="1" fill="none"/>
<path d="M686.5 219 V232 L695 235.5" stroke="#A34848" stroke-width="1" fill="none"/>
<rect x="695" y="230" width="4.6" height="25" fill="#A34848"/>
<path d="M699.6 242.5 H713" stroke="#A34848" stroke-width="1" fill="none"/>
<line x1="709.5" y1="240" x2="709.5" y2="245" stroke="#555" stroke-width="0.8"/>
<line x1="709.5" y1="245" x2="709.5" y2="270" stroke="#3E9A3E" stroke-width="1"/>
<path d="M695 249.5 L686.5 254 V270" stroke="#A34848" stroke-width="1" fill="none"/>
<path d="M690 250.5 L693 250 L692 253 Z" stroke="#A34848" stroke-width="1" fill="none"/>
<text x="709.5" y="227" font-size="11.5" fill="#A4A4A4" text-anchor="end">Q2</text>
<text x="709.5" y="223.5" font-size="9" fill="#A4A4A4" >+</text>
<path d="M734 197 L744.5 208 V219" stroke="#3E9A3E" stroke-width="1" fill="none"/>
<path d="M744.5 219 V232 L753 235.5" stroke="#A34848" stroke-width="1" fill="none"/>
<rect x="753" y="230" width="4.6" height="25" fill="#A34848"/>
<path d="M757.6 242.5 H771" stroke="#A34848" stroke-width="1" fill="none"/>
<line x1="767.5" y1="240" x2="767.5" y2="245" stroke="#555" stroke-width="0.8"/>
<line x1="767.5" y1="245" x2="767.5" y2="270" stroke="#3E9A3E" stroke-width="1"/>
<path d="M753 249.5 L744.5 254 V270" stroke="#A34848" stroke-width="1" fill="none"/>
<path d="M748 250.5 L751 250 L750 253 Z" stroke="#A34848" stroke-width="1" fill="none"/>
<text x="767.5" y="227" font-size="11.5" fill="#A4A4A4" text-anchor="end">Q1</text>
<text x="767.5" y="223.5" font-size="9" fill="#A4A4A4" >+</text>
<text x="189" y="250" font-size="11.5" fill="#A4A4A4" >VCC</text>
<text x="210.5" y="246" font-size="9" fill="#A4A4A4" >+</text>
<path d="M192 268 L199 254 L206 268" stroke="#A34848" stroke-width="2" fill="none"/>
<line x1="199" y1="254" x2="199" y2="270" stroke="#A34848" stroke-width="1"/>
<path d="M900 277 H939 V427 H900" stroke="#A34848" stroke-width="2" fill="none"/>
<text x="903" y="271" font-size="11.5" fill="#A4A4A4" >4017</text>
<text x="910" y="293" font-size="10.5" fill="#A4A4A4" >RES</text>
<text x="910" y="315" font-size="10.5" fill="#A4A4A4" >ENA</text>
<text x="911" y="361" font-size="10.5" fill="#A4A4A4" >CLK</text>
<text x="897" y="439" font-size="11.5" fill="#A4A4A4" >IC2</text>
<text x="914" y="434" font-size="9" fill="#A4A4A4" >+</text>
<line x1="939" y1="288.5" x2="962.5" y2="288.5" stroke="#A34848" stroke-width="1"/>
<path d="M962.5 288.5 V265.5 H1020.5 V277" stroke="#3E9A3E" stroke-width="1" fill="none"/>
<text x="951" y="287" font-size="10" fill="#A4A4A4" >15</text>
<circle cx="944.5" cy="312" r="4.8" stroke="#A34848" stroke-width="1.2" fill="none"/>
<line x1="949.5" y1="312.5" x2="963" y2="312.5" stroke="#A34848" stroke-width="1"/>
<line x1="963" y1="312.5" x2="1020.5" y2="312.5" stroke="#3E9A3E" stroke-width="1"/>
<line x1="1020.5" y1="312.5" x2="1020.5" y2="300" stroke="#A34848" stroke-width="1"/>
<text x="951" y="310" font-size="10" fill="#A4A4A4" >13</text>
<line x1="997.5" y1="265" x2="997.5" y2="282" stroke="#A34848" stroke-width="1"/>
<path d="M988 282 H1007" stroke="#A34848" stroke-width="2" fill="none"/>
<path d="M988.5 300 L997.5 283 L1006.5 300 Z" stroke="#A34848" stroke-width="2" fill="none"/>
<line x1="997.5" y1="300" x2="997.5" y2="312" stroke="#A34848" stroke-width="1"/>
<line x1="997.5" y1="312" x2="997.5" y2="322" stroke="#3E9A3E" stroke-width="1"/>
<line x1="997.5" y1="322" x2="997.5" y2="334" stroke="#A34848" stroke-width="1"/>
<path d="M986 334.5 H1010" stroke="#A34848" stroke-width="2" fill="none"/>
<text x="986" y="346" font-size="11.5" fill="#A4A4A4" >GND</text>
<text x="981" y="349" font-size="9" fill="#A4A4A4" >+</text>
<rect x="1015" y="277" width="11" height="23" fill="none" stroke="#A34848" stroke-width="2"/>
<text x="1017.5" y="293" font-size="9" fill="#A34848" >+</text>
<text x="1032" y="283" font-size="11.5" fill="#A4A4A4" >R11</text>
<text x="1028" y="287" font-size="9" fill="#A4A4A4" >+</text>
<text x="1030" y="297" font-size="11.5" fill="#A4A4A4" >1K</text>
<text x="1044" y="292" font-size="9" fill="#A4A4A4" >+</text>
<text x="983" y="296" font-size="11.5" fill="#A4A4A4" transform="rotate(-90 983 296)">D2</text>
<circle cx="997.5" cy="265.5" r="2.2" stroke="#3E9A3E" stroke-width="0" fill="#3E9A3E"/>
<circle cx="997.5" cy="312.5" r="2.2" stroke="#3E9A3E" stroke-width="0" fill="#3E9A3E"/>
<path d="M990 219 L997.5 208 L1005 219" stroke="#A34848" stroke-width="2" fill="none"/>
<line x1="997.5" y1="208" x2="997.5" y2="232" stroke="#3E9A3E" stroke-width="1"/>
<line x1="997.5" y1="232" x2="997.5" y2="242" stroke="#A34848" stroke-width="1"/>
<line x1="994" y1="232" x2="1001" y2="232" stroke="#A34848" stroke-width="0.8"/>
<path d="M985.5 242 H1010" stroke="#A34848" stroke-width="2.2" fill="none"/>
<path d="M985.5 252 Q997.5 244 1010 252" stroke="#A34848" stroke-width="2.2" fill="none"/>
<line x1="997.5" y1="248" x2="997.5" y2="265" stroke="#A34848" stroke-width="1"/>
<text x="987" y="205" font-size="11.5" fill="#A4A4A4" >VCC</text>
<text x="1009" y="201" font-size="9" fill="#A4A4A4" >+</text>
<text x="961" y="245" font-size="11.5" fill="#A4A4A4" >C2</text>
<text x="975" y="241" font-size="9" fill="#A4A4A4" >+</text>
<text x="1021" y="250" font-size="11.5" fill="#A4A4A4" >1u</text>
<text x="1018" y="252" font-size="9" fill="#A4A4A4" >+</text>
<path d="M939 353.5 L930.5 358.5 L939 363.5" stroke="#A34848" stroke-width="1" fill="none"/>
<line x1="939" y1="358.5" x2="962" y2="358.5" stroke="#A34848" stroke-width="1"/>
<line x1="962" y1="358.5" x2="1078.5" y2="358.5" stroke="#3E9A3E" stroke-width="1"/>
<line x1="1078.5" y1="358.5" x2="1078.5" y2="381" stroke="#A34848" stroke-width="1"/>
<text x="951" y="356" font-size="10" fill="#A4A4A4" >14</text>
<circle cx="986.4" cy="358.5" r="2.2" stroke="#3E9A3E" stroke-width="0" fill="#3E9A3E"/>
<circle cx="1032.4" cy="358.5" r="2.2" stroke="#3E9A3E" stroke-width="0" fill="#3E9A3E"/>
<circle cx="1055.5" cy="358.5" r="2.2" stroke="#3E9A3E" stroke-width="0" fill="#3E9A3E"/>
<line x1="986.4" y1="358.5" x2="986.4" y2="371" stroke="#A34848" stroke-width="1"/>
<circle cx="986.4" cy="376" r="4.8" stroke="#A34848" stroke-width="1.2" fill="none"/>
<path d="M986.4 381 L974.5 415.7 H998.3 Z" stroke="#A34848" stroke-width="2" fill="none"/>
<text x="983.5" y="402" font-size="9" fill="#A34848" >+</text>
<path d="M986.4 416 V439.5" stroke="#A34848" stroke-width="1" fill="none"/>
<line x1="986.4" y1="439.5" x2="1032.4" y2="439.5" stroke="#3E9A3E" stroke-width="1"/>
<circle cx="1032.4" cy="439.5" r="2.2" stroke="#3E9A3E" stroke-width="0" fill="#3E9A3E"/>
<rect x="1026" y="369" width="12" height="23" fill="none" stroke="#A34848" stroke-width="2"/>
<text x="1029" y="385" font-size="9" fill="#A34848" >+</text>
<path d="M1003.5 364.5 L1038 381" stroke="#A34848" stroke-width="1" fill="none"/>
<path d="M1003.5 364.5 L1015 366 L1012 371 Z" stroke="#A34848" stroke-width="1" fill="none"/>
<path d="M1038 381 H1055.5" stroke="#A34848" stroke-width="1" fill="none"/>
<line x1="1055.5" y1="381" x2="1055.5" y2="358.5" stroke="#3E9A3E" stroke-width="1"/>
<line x1="1032.4" y1="358.5" x2="1032.4" y2="369" stroke="#A34848" stroke-width="1"/>
<line x1="1032.4" y1="392" x2="1032.4" y2="404" stroke="#A34848" stroke-width="1"/>
<line x1="1032.4" y1="404" x2="1032.4" y2="439.5" stroke="#3E9A3E" stroke-width="1"/>
<text x="1018" y="400" font-size="11.5" fill="#A4A4A4" transform="rotate(-90 1018 400)">R12</text>
<text x="1055" y="418" font-size="11.5" fill="#A4A4A4" transform="rotate(-90 1055 418)">100K</text>
<line x1="1032.4" y1="439.5" x2="1052" y2="439.5" stroke="#A34848" stroke-width="1"/>
<path d="M1052 431 V447 M1056 431 V447" stroke="#A34848" stroke-width="2" fill="none"/>
<line x1="1056" y1="439.5" x2="1078.5" y2="439.5" stroke="#A34848" stroke-width="1"/>
<line x1="1078.5" y1="439.5" x2="1078.5" y2="425.5" stroke="#A34848" stroke-width="1"/>
<text x="1042" y="458" font-size="11.5" fill="#A4A4A4" >C1</text>
<text x="1056" y="454" font-size="9" fill="#A4A4A4" >+</text>
<text x="1063" y="452" font-size="11" fill="#A4A4A4" >+1</text>
<path d="M1067 381 H1090 L1078.5 416 Z" stroke="#A34848" stroke-width="2" fill="none"/>
<text x="1075" y="395" font-size="9" fill="#A34848" >+</text>
<circle cx="1078.5" cy="420.5" r="4.8" stroke="#A34848" stroke-width="1.2" fill="none"/>
<text x="998" y="382" font-size="8.5" fill="#A4A4A4" transform="rotate(-90 998 382)">IC4F</text>
<text x="979" y="408" font-size="8.5" fill="#A4A4A4" transform="rotate(-90 979 408)">4069</text>
<text x="1075" y="433" font-size="8.5" fill="#A4A4A4" transform="rotate(-90 1075 433)">IC4B</text></svg>
</div>

<!-- scrollbars -->
<div class="sb" style="left:50px;top:790px;width:1086px;height:16px;background:linear-gradient(#EDEBE3 0 1px,#FDFDFB 1px,#FEFEFC 60%,#F4F3EE)"></div>
<div class="sbbtn" style="left:51px;top:791px;width:15px;height:15px"><svg class="a" style="left:3px;top:2px" width="9" height="11"><path d="M6 2 L3 5.5 L6 9" stroke="#C4C3BC" stroke-width="2" fill="none"/></svg></div>
<div class="sbbtn" style="left:1119px;top:791px;width:15px;height:15px"><svg class="a" style="left:3px;top:2px" width="9" height="11"><path d="M3 2 L6 5.5 L3 9" stroke="#C4C3BC" stroke-width="2" fill="none"/></svg></div>
<div class="sb" style="left:1136px;top:120px;width:15px;height:670px;background:linear-gradient(90deg,#EDEBE3 0 1px,#FDFDFB 1px,#FEFEFC 60%,#F7F6F1)"></div>
<div class="sbbtn" style="left:1136px;top:122px;width:15px;height:16px"><svg class="a" style="left:2px;top:3px" width="11" height="9"><path d="M2 6 L5.5 3 L9 6" stroke="#C4C3BC" stroke-width="2" fill="none"/></svg></div>
<div class="sbbtn" style="left:1136px;top:774px;width:15px;height:15px"><svg class="a" style="left:2px;top:3px" width="11" height="9"><path d="M2 3 L5.5 6 L9 3" stroke="#C4C3BC" stroke-width="2" fill="none"/></svg></div>

<!-- dialog placeholder -->
<div class="a" style="left:160px;top:264px;width:748px;height:494px;border-radius:7px 7px 0 0;background:#0030D0;overflow:hidden">
  <div class="a" style="left:0;top:0;width:748px;height:30px;background:linear-gradient(#0040D0 0,#0040D0 1px,#3D8FF8 1px,#2A7AF4 2px,#0A5EEA 3px,#0058E8 6px,#0054E2 14px,#0058E8 19px,#0062F2 24px,#0068F8 27px,#0050E0 28px,#0030C8 29px,#0030C8 30px)"></div>
  <div class="a" style="left:0;top:6px;width:4px;height:488px;background:linear-gradient(90deg,#0010A8 0 1px,#0535D8 1px 2px,#2565F5 2px 3px,#0A4BE0 3px 4px)"></div>
  <div class="a" style="right:0;top:6px;width:4px;height:488px;background:linear-gradient(90deg,#1850F0 0 1px,#0A40E0 1px 2px,#0025C0 2px 3px,#0010A0 3px 4px)"></div>
  <div class="a" style="left:0;bottom:0;width:748px;height:4px;background:linear-gradient(#1550F0 0 1px,#0840E0 1px 2px,#0028C0 2px 3px,#0010A0 3px 4px)"></div>
  <div class="a" style="left:4px;top:30px;width:740px;height:460px;background:#ECE9D8;border-left:1px solid #DDEBFF;border-right:1px solid #DDEBFF;border-bottom:1px solid #DDEBFF"></div>
</div>
<svg class="a" style="left:167px;top:273px" width="16" height="16" viewBox="0 0 16 16" shape-rendering="crispEdges">
    <rect x="1" y="1" width="13" height="13" fill="#100000"/>
    <rect x="0" y="0" width="13" height="13" fill="#B00000"/>
    <rect x="1" y="1" width="11" height="11" fill="#fff"/>
    <rect x="2" y="3" width="3" height="2" fill="#A00000"/><rect x="2" y="6" width="3" height="2" fill="#A00000"/>
    <rect x="5" y="3" width="3" height="1" fill="#30A030"/><rect x="5" y="6" width="3" height="1" fill="#30A030"/><rect x="8" y="3" width="4" height="4" fill="#A00000"/><rect x="9" y="4" width="1" height="2" fill="#fff"/>
    <rect x="6" y="9" width="7" height="4" fill="#B00000"/><rect x="7" y="10" width="1" height="1" fill="#fff"/><rect x="8" y="11" width="2" height="1" fill="#fff"/><rect x="10" y="10" width="2" height="1" fill="#fff"/>
  </svg>
<div class="t" style="left:186px;top:273px;font:bold 13px 'Liberation Sans',sans-serif;color:#fff;line-height:16px;transform:scaleX(0.84);transform-origin:0 0">ADD</div>
<div class="a" style="left:881px;top:270px;width:22px;height:22px;border:1px solid #fff;border-radius:3px;background:radial-gradient(circle at 40% 35%,#F08A64,#E25A32 55%,#C8411E)"><svg class="a" style="left:4px;top:4px" width="12" height="12"><path d="M1.5 1.5 L10.5 10.5 M10.5 1.5 L1.5 10.5" stroke="#fff" stroke-width="2"/></svg></div>

<!-- list view -->
<div class="a" style="left:175px;top:305px;width:439px;height:341px;border:1px solid #7F9DB9;background:#fff"></div>
<div class="a" style="left:176px;top:306px;width:421px;height:22px;background:linear-gradient(#EBEAE3 0,#EBEAE3 17px,#E3E1D6 18px,#D6D3C6 20px,#CBC7B8 22px)"></div>
<div class="a" style="left:372px;top:309px;width:1px;height:15px;background:#C7C5B8"></div>
<div class="a" style="left:373px;top:309px;width:1px;height:15px;background:#fff"></div>
<div class="t" style="left:179px;top:311px">Name</div>
<div class="t" style="left:377px;top:311px">Description</div>
<svg class="a" style="left:354px;top:310px" width="11" height="7"><path d="M0.5 6 L5 1 L9.5 6 Z" fill="#ACA899"/></svg>
<!-- selected row -->
<div class="a" style="left:196px;top:328px;width:177px;height:14px;background:#316AC5;outline:1px dotted #8a6a2a;outline-offset:-1px"></div>
<div class="a" style="left:373px;top:328px;width:224px;height:14px;background:#316AC5"></div>
<!-- tree lines -->
<svg class="a" style="left:176px;top:328px" width="60" height="317">
  <g stroke="#A0A0A0" stroke-width="1" stroke-dasharray="1 1" fill="none" shape-rendering="crispEdges">
    <line x1="10.5" y1="0" x2="10.5" y2="317"/>
    <line x1="30.5" y1="14" x2="30.5" y2="317"/>
    <line x1="15" y1="7.5" x2="20" y2="7.5"/>
  </g>
  <g stroke="#A0A0A0" stroke-dasharray="1 1" shape-rendering="crispEdges" id="hd"></g>
</svg>
<div class="a" style="left:207px;top:349px;width:9px;height:1px;background:repeating-linear-gradient(90deg,#A0A0A0 0 1px,transparent 1px 2px)"></div>
<div class="a" style="left:207px;top:363px;width:9px;height:1px;background:repeating-linear-gradient(90deg,#A0A0A0 0 1px,transparent 1px 2px)"></div>
<div class="a" style="left:211px;top:377px;width:5px;height:1px;background:repeating-linear-gradient(90deg,#A0A0A0 0 1px,transparent 1px 2px)"></div>
<div class="a" style="left:207px;top:391px;width:9px;height:1px;background:repeating-linear-gradient(90deg,#A0A0A0 0 1px,transparent 1px 2px)"></div>
<div class="a" style="left:207px;top:405px;width:9px;height:1px;background:repeating-linear-gradient(90deg,#A0A0A0 0 1px,transparent 1px 2px)"></div>
<div class="a" style="left:207px;top:419px;width:9px;height:1px;background:repeating-linear-gradient(90deg,#A0A0A0 0 1px,transparent 1px 2px)"></div>
<div class="a" style="left:207px;top:433px;width:9px;height:1px;background:repeating-linear-gradient(90deg,#A0A0A0 0 1px,transparent 1px 2px)"></div>
<div class="a" style="left:207px;top:447px;width:9px;height:1px;background:repeating-linear-gradient(90deg,#A0A0A0 0 1px,transparent 1px 2px)"></div>
<div class="a" style="left:207px;top:461px;width:9px;height:1px;background:repeating-linear-gradient(90deg,#A0A0A0 0 1px,transparent 1px 2px)"></div>
<div class="a" style="left:207px;top:475px;width:9px;height:1px;background:repeating-linear-gradient(90deg,#A0A0A0 0 1px,transparent 1px 2px)"></div>
<div class="a" style="left:207px;top:489px;width:9px;height:1px;background:repeating-linear-gradient(90deg,#A0A0A0 0 1px,transparent 1px 2px)"></div>
<div class="a" style="left:207px;top:503px;width:9px;height:1px;background:repeating-linear-gradient(90deg,#A0A0A0 0 1px,transparent 1px 2px)"></div>
<div class="a" style="left:207px;top:517px;width:9px;height:1px;background:repeating-linear-gradient(90deg,#A0A0A0 0 1px,transparent 1px 2px)"></div>
<div class="a" style="left:207px;top:531px;width:9px;height:1px;background:repeating-linear-gradient(90deg,#A0A0A0 0 1px,transparent 1px 2px)"></div>
<div class="a" style="left:207px;top:545px;width:9px;height:1px;background:repeating-linear-gradient(90deg,#A0A0A0 0 1px,transparent 1px 2px)"></div>
<div class="a" style="left:207px;top:559px;width:9px;height:1px;background:repeating-linear-gradient(90deg,#A0A0A0 0 1px,transparent 1px 2px)"></div>
<div class="a" style="left:207px;top:573px;width:9px;height:1px;background:repeating-linear-gradient(90deg,#A0A0A0 0 1px,transparent 1px 2px)"></div>
<div class="a" style="left:207px;top:587px;width:9px;height:1px;background:repeating-linear-gradient(90deg,#A0A0A0 0 1px,transparent 1px 2px)"></div>
<div class="a" style="left:207px;top:601px;width:9px;height:1px;background:repeating-linear-gradient(90deg,#A0A0A0 0 1px,transparent 1px 2px)"></div>
<div class="a" style="left:207px;top:615px;width:9px;height:1px;background:repeating-linear-gradient(90deg,#A0A0A0 0 1px,transparent 1px 2px)"></div>
<div class="a" style="left:207px;top:629px;width:9px;height:1px;background:repeating-linear-gradient(90deg,#A0A0A0 0 1px,transparent 1px 2px)"></div>
<div class="a" style="left:207px;top:643px;width:9px;height:1px;background:repeating-linear-gradient(90deg,#A0A0A0 0 1px,transparent 1px 2px)"></div>
<div class="t" style="left:198px;top:329px;color:#fff">diode</div><div class="t" style="left:376px;top:329px;letter-spacing:-0.3px;color:#fff">Diodes</div>
<div class="t" style="left:219px;top:343px;letter-spacing:-0.3px">1N821</div><div class="t" style="left:376px;top:343px;letter-spacing:-0.3px">Reference DIODE</div>
<div class="t" style="left:219px;top:357px;letter-spacing:-0.3px">1N4004</div><div class="t" style="left:376px;top:357px;letter-spacing:-0.3px">DIODE</div>
<div class="t" style="left:219px;top:371px;letter-spacing:-0.3px">1N4148</div><div class="t" style="left:376px;top:371px;letter-spacing:-0.3px">DIODE</div>
<div class="t" style="left:219px;top:385px;letter-spacing:-0.3px">1N4446</div><div class="t" style="left:376px;top:385px;letter-spacing:-0.3px">DIODE</div>
<div class="t" style="left:219px;top:399px;letter-spacing:-0.3px">1N4728</div><div class="t" style="left:376px;top:399px;letter-spacing:-0.3px">Z DIODE</div>
<div class="t" style="left:219px;top:413px;letter-spacing:-0.3px">1N4933</div><div class="t" style="left:376px;top:413px;letter-spacing:-0.3px">DIODE</div>
<div class="t" style="left:219px;top:427px;letter-spacing:-0.3px">1N4942</div><div class="t" style="left:376px;top:427px;letter-spacing:-0.3px">DIODE</div>
<div class="t" style="left:219px;top:441px;letter-spacing:-0.3px">1N5059</div><div class="t" style="left:376px;top:441px;letter-spacing:-0.3px">DIODE</div>
<div class="t" style="left:219px;top:455px;letter-spacing:-0.3px">1N5060GP</div><div class="t" style="left:376px;top:455px;letter-spacing:-0.3px">DIODE</div>
<div class="t" style="left:219px;top:469px;letter-spacing:-0.3px">1N5061</div><div class="t" style="left:376px;top:469px;letter-spacing:-0.3px">DIODE</div>
<div class="t" style="left:219px;top:483px;letter-spacing:-0.3px">1N5333</div><div class="t" style="left:376px;top:483px;letter-spacing:-0.3px">Z DIODE</div>
<div class="t" style="left:219px;top:497px;letter-spacing:-0.3px">1N5400</div><div class="t" style="left:376px;top:497px;letter-spacing:-0.3px">DIODE</div>
<div class="t" style="left:219px;top:511px;letter-spacing:-0.3px">1N5624</div><div class="t" style="left:376px;top:511px;letter-spacing:-0.3px">DIODE</div>
<div class="t" style="left:219px;top:525px;letter-spacing:-0.3px">1N5638</div><div class="t" style="left:376px;top:525px;letter-spacing:-0.3px">DIODE</div>
<div class="t" style="left:219px;top:539px;letter-spacing:-0.3px">1N5908</div><div class="t" style="left:376px;top:539px;letter-spacing:-0.3px">DIODE</div>
<div class="t" style="left:219px;top:553px;letter-spacing:-0.3px">1N6267A</div><div class="t" style="left:376px;top:553px;letter-spacing:-0.3px">DIODE</div>
<div class="t" style="left:219px;top:567px;letter-spacing:-0.3px">5KPXX</div><div class="t" style="left:376px;top:567px;letter-spacing:-0.3px">DIODE</div>
<div class="t" style="left:219px;top:581px;letter-spacing:-0.3px">15KEXX</div><div class="t" style="left:376px;top:581px;letter-spacing:-0.3px">DIODE</div>
<div class="t" style="left:219px;top:595px;letter-spacing:-0.3px">15KEXXC</div><div class="t" style="left:376px;top:595px;letter-spacing:-0.3px">DIODE</div>
<div class="t" style="left:219px;top:609px;letter-spacing:-0.3px">15KEXXD</div><div class="t" style="left:376px;top:609px;letter-spacing:-0.3px">DIODE</div>
<div class="t" style="left:219px;top:623px;letter-spacing:-0.3px">A114</div><div class="t" style="left:376px;top:623px;letter-spacing:-0.3px">DIODE</div>
<div class="t" style="left:219px;top:637px;letter-spacing:-0.3px">AA112</div><div class="t" style="left:376px;top:637px;letter-spacing:-0.3px">DIODE</div>
<div class="a" style="left:175px;top:645px;width:439px;height:8px;background:#ECE9D8;border-top:1px solid #7F9DB9"></div>
<!-- expander boxes -->
<div class="a" style="left:182px;top:331px;width:9px;height:9px;border:1px solid #7A8FA5;background:linear-gradient(135deg,#fff,#D8D6CC)"><div class="a" style="left:1px;top:3px;width:5px;height:1px;background:#000"></div></div>
<div class="a" style="left:202px;top:373px;width:9px;height:9px;border:1px solid #7A8FA5;background:linear-gradient(135deg,#fff,#D8D6CC)"><div class="a" style="left:1px;top:3px;width:5px;height:1px;background:#000"></div><div class="a" style="left:3px;top:1px;width:1px;height:5px;background:#000"></div></div>
<!-- list scrollbar -->
<div class="a" style="left:597px;top:306px;width:16px;height:339px;background:linear-gradient(90deg,#F3F1EC,#FEFEFB 50%,#F3F1EC)"></div>
<div class="a" style="left:597px;top:307px;width:15px;height:15px;border:1px solid #fff;border-radius:2px;background:linear-gradient(135deg,#DCE6FC,#B9CBF6)"><svg class="a" style="left:2px;top:3px" width="11" height="8"><path d="M2 6 L5.5 2.5 L9 6" stroke="#4D6185" stroke-width="2" fill="none"/></svg></div>
<div class="a" style="left:597px;top:323px;width:15px;height:27px;border:1px solid #fff;border-radius:2px;background:linear-gradient(90deg,#C9D7FA,#BCCDF7 60%,#B3C6F4)"><div class="a" style="left:3px;top:9px;width:7px;height:7px;background:repeating-linear-gradient(#EEF3FE 0 1px,#8DA7E3 1px 2px)"></div></div>
<div class="a" style="left:597px;top:629px;width:15px;height:15px;border:1px solid #fff;border-radius:2px;background:linear-gradient(135deg,#DCE6FC,#B9CBF6)"><svg class="a" style="left:2px;top:3px" width="11" height="8"><path d="M2 2 L5.5 5.5 L9 2" stroke="#4D6185" stroke-width="2" fill="none"/></svg></div>

<!-- preview panes -->
<div class="a" style="left:619px;top:305px;width:135px;height:200px;background:#fff;border-top:2px solid #A5A08D;border-left:2px solid #A5A08D;border-right:1px solid #fff;border-bottom:1px solid #fff"></div>
<div class="a" style="left:759px;top:305px;width:134px;height:200px;background:#fff;border-top:2px solid #A5A08D;border-left:2px solid #A5A08D;border-right:1px solid #fff;border-bottom:1px solid #fff"></div>
<!-- description pane -->
<div class="a" style="left:619px;top:510px;width:274px;height:192px;background:#fff;border:1px solid #7F9DB9"></div>
<div class="t" style="left:623px;top:516px;font-weight:bold">Diodes</div>
<div class="t" style="left:624px;top:542px">Based on the following sources:</div>
<div class="t" style="left:656px;top:568px;font-weight:bold">•</div><div class="t" style="left:663px;top:568px">Motorola : www.onsemi.com</div>
<div class="t" style="left:656px;top:582px;font-weight:bold">•</div><div class="t" style="left:663px;top:582px">Fairchild : www.fairchildsemi.com</div>
<div class="t" style="left:656px;top:596px;font-weight:bold">•</div><div class="t" style="left:663px;top:596px">Philips : www.semiconductors.com</div>
<div class="t" style="left:656px;top:610px;font-weight:bold">•</div><div class="t" style="left:663px;top:610px">Vishay : www.vishay.de</div>
<div class="t" style="left:624px;top:636px;font-style:italic">Created by librarian@cadsoft.de</div>

<!-- search row -->
<div class="t" style="left:174px;top:654px">Search</div>
<div class="a" style="left:237px;top:654px;width:13px;height:13px;border:1px solid #1C5180;background:linear-gradient(135deg,#E4E3DC,#fff 75%)"><svg class="a" style="left:2px;top:2px" width="9" height="9"><path d="M1 4 L3.5 6.5 L8 1.5" stroke="#21A121" stroke-width="2" fill="none"/></svg></div>
<div class="t" style="left:255px;top:654px">Smds</div>
<div class="a" style="left:315px;top:654px;width:13px;height:13px;border:1px solid #1C5180;background:linear-gradient(135deg,#E4E3DC,#fff 75%)"><svg class="a" style="left:2px;top:2px" width="9" height="9"><path d="M1 4 L3.5 6.5 L8 1.5" stroke="#21A121" stroke-width="2" fill="none"/></svg></div>
<div class="t" style="left:333px;top:654px">Description</div>
<div class="a" style="left:421px;top:654px;width:13px;height:13px;border:1px solid #1C5180;background:linear-gradient(135deg,#E4E3DC,#fff 75%)"><svg class="a" style="left:2px;top:2px" width="9" height="9"><path d="M1 4 L3.5 6.5 L8 1.5" stroke="#21A121" stroke-width="2" fill="none"/></svg></div>
<div class="t" style="left:439px;top:654px">Preview</div>

<!-- combo -->
<svg class="a" style="left:182px;top:682px" width="17" height="13"><path d="M1 1 H11 L16 6.5 L11 12 H1 Z" fill="#111"/><path d="M4 3.5 L9 9 M9 3.5 L4 9" stroke="#fff" stroke-width="2"/></svg>
<div class="a" style="left:211px;top:679px;width:403px;height:20px;border:1px solid #7F9DB9;background:#fff"></div>
<div class="t" style="left:216px;top:683px">diode</div>
<div class="a" style="left:597px;top:680px;width:16px;height:18px;border:1px solid #fff;border-radius:2px;background:linear-gradient(135deg,#DCE6FC,#B9CBF6)"><svg class="a" style="left:3px;top:5px" width="10" height="8"><path d="M1.5 1.5 L5 5 L8.5 1.5" stroke="#4D6185" stroke-width="2" fill="none"/></svg></div>

<!-- buttons -->
<div class="a" style="left:651px;top:719px;width:75px;height:23px;border:1px solid #003C74;border-radius:3px;background:linear-gradient(#FFFFFF,#F4F3EE 60%,#ECEBE6);box-shadow:inset 0 1px 0 #CEE7FF,inset 0 -2px 0 #6982EE,inset 1px 0 0 #B7D1FC,inset -1px 0 0 #98B8F8,inset 2px 0 0 #C9DDFC,inset -2px 0 0 #B0CBF8"></div>
<div class="t" style="left:651px;top:725px;width:75px;text-align:center">OK</div>
<div class="a" style="left:734px;top:719px;width:75px;height:23px;border:1px solid #003C74;border-radius:3px;background:linear-gradient(#FFFFFF,#F4F3EE 60%,#E6E4DA);box-shadow:inset 0 -1px 0 #D6D0C5"></div>
<div class="t" style="left:734px;top:725px;width:75px;text-align:center">Cancel</div>
<div class="a" style="left:817px;top:719px;width:75px;height:23px;border:1px solid #003C74;border-radius:3px;background:linear-gradient(#FFFFFF,#F4F3EE 60%,#E6E4DA);box-shadow:inset 0 -1px 0 #D6D0C5"></div>
<div class="t" style="left:817px;top:725px;width:75px;text-align:center">Drop</div>


</body></html>
